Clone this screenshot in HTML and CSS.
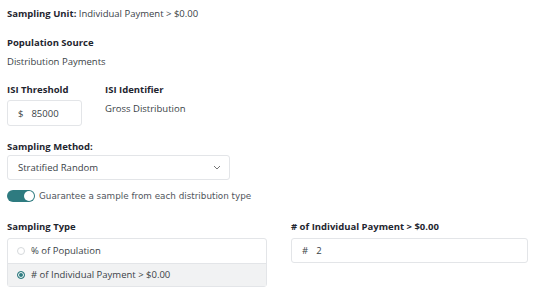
FILE: index.html
```html
<!DOCTYPE html>
<html>
<head>
    <meta charset="utf-8" />
    <title>Sampling</title>
    <link rel="stylesheet" href="styles.css">
</head>
<body>
    <div class="page">
        <div class="unit"><b>Sampling Unit:</b> Individual Payment &gt; $0.00</div>

        <div class="field source">
            <div class="label">Population Source</div>
            <div class="value">Distribution Payments</div>
        </div>

        <div class="row-isi">
            <div class="field">
                <div class="label">ISI Threshold</div>
                <div class="input small"><span class="prefix">$</span>85000</div>
            </div>
            <div class="field">
                <div class="label">ISI Identifier</div>
                <div class="value">Gross Distribution</div>
            </div>
        </div>

        <div class="field method">
            <div class="label">Sampling Method:</div>
            <div class="input select">
                <span>Stratified Random</span>
                <svg width="8" height="5" viewBox="0 0 8 5"><path d="M1 1l3 3 3-3" fill="none" stroke="#777" stroke-width="1"/></svg>
            </div>
        </div>

        <div class="toggle-row">
            <span class="toggle"><span class="knob"></span></span>
            <span class="toggle-label">Guarantee a sample from each distribution type</span>
        </div>

        <div class="row-type">
            <div class="field">
                <div class="label">Sampling Type</div>
                <div class="radios">
                    <div class="radio"><span class="dot"></span>% of Population</div>
                    <div class="radio checked"><span class="dot"></span># of Individual Payment &gt; $0.00</div>
                </div>
            </div>
            <div class="field">
                <div class="label"># of Individual Payment &gt; $0.00</div>
                <div class="input"><span class="prefix">#</span>2</div>
            </div>
        </div>
    </div>
</body>
</html>
```

FILE: styles.css
```css
* {
    box-sizing: border-box;
}

html, body {
    margin: 0;
    padding: 0;
}

body {
    font-family: "Open Sans", Arial, sans-serif;
    font-size: 9.5px;
    color: #3a3f47;
    background: #fff;
}

.page {
    padding: 7px 9px 0 7px;
}

.unit {
    line-height: 14px;
    margin-bottom: 15px;
}

.unit b, .label {
    font-weight: 700;
    color: #1f2630;
}

.label {
    line-height: 14px;
    margin-bottom: 3px;
}

.value {
    line-height: 14px;
    margin-top: 5px;
}

.field {
    margin-bottom: 16px;
}

.field.source {
    margin-bottom: 14px;
}

.row-isi .field {
    margin-bottom: 14px;
}

.field.method .label {
    margin-bottom: 1px;
}

.row-isi {
    display: flex;
    gap: 23px;
}

.input {
    height: 25px;
    border: 1px solid #e3e5e8;
    border-radius: 3px;
    display: flex;
    align-items: center;
    padding: 0 10px;
}

.input.small {
    width: 75px;
    height: 26px;
}

.prefix {
    margin-right: 8px;
}

.select {
    width: 223px;
    justify-content: space-between;
    padding-right: 8px;
}

.toggle-row {
    display: flex;
    align-items: center;
    gap: 4px;
    margin-top: -6px;
    margin-bottom: 18px;
}

.toggle {
    width: 28px;
    height: 12px;
    border-radius: 6px;
    background: #2e7b80;
    position: relative;
}

.knob {
    position: absolute;
    right: 1px;
    top: 1px;
    width: 10px;
    height: 10px;
    border-radius: 50%;
    background: #fff;
}

.toggle-label {
    font-family: "DejaVu Sans", sans-serif;
    font-size: 8.8px;
    color: #50555c;
}

.row-type {
    display: flex;
    gap: 24px;
}

.row-type .field {
    flex: 1;
    margin-bottom: 0;
}

.row-type .label {
    margin-bottom: 4px;
}

.row-type .field:first-child {
    flex: 0 0 260px;
}

.radios {
    border: 1px solid #e3e5e8;
    border-radius: 3px;
}

.radio {
    height: 23.5px;
    display: flex;
    align-items: center;
    padding-left: 9px;
    gap: 6px;
}

.radio.checked {
    background: #f1f2f3;
    border-top: 1px solid #e3e5e8;
}

.dot {
    width: 8px;
    height: 8px;
    border-radius: 50%;
    border: 1px solid #d6d9dc;
    background: #fff;
}

.checked .dot {
    border: 1px solid #2e7b80;
    background: #2e7b80;
    box-shadow: inset 0 0 0 1px #fff;
}
```
